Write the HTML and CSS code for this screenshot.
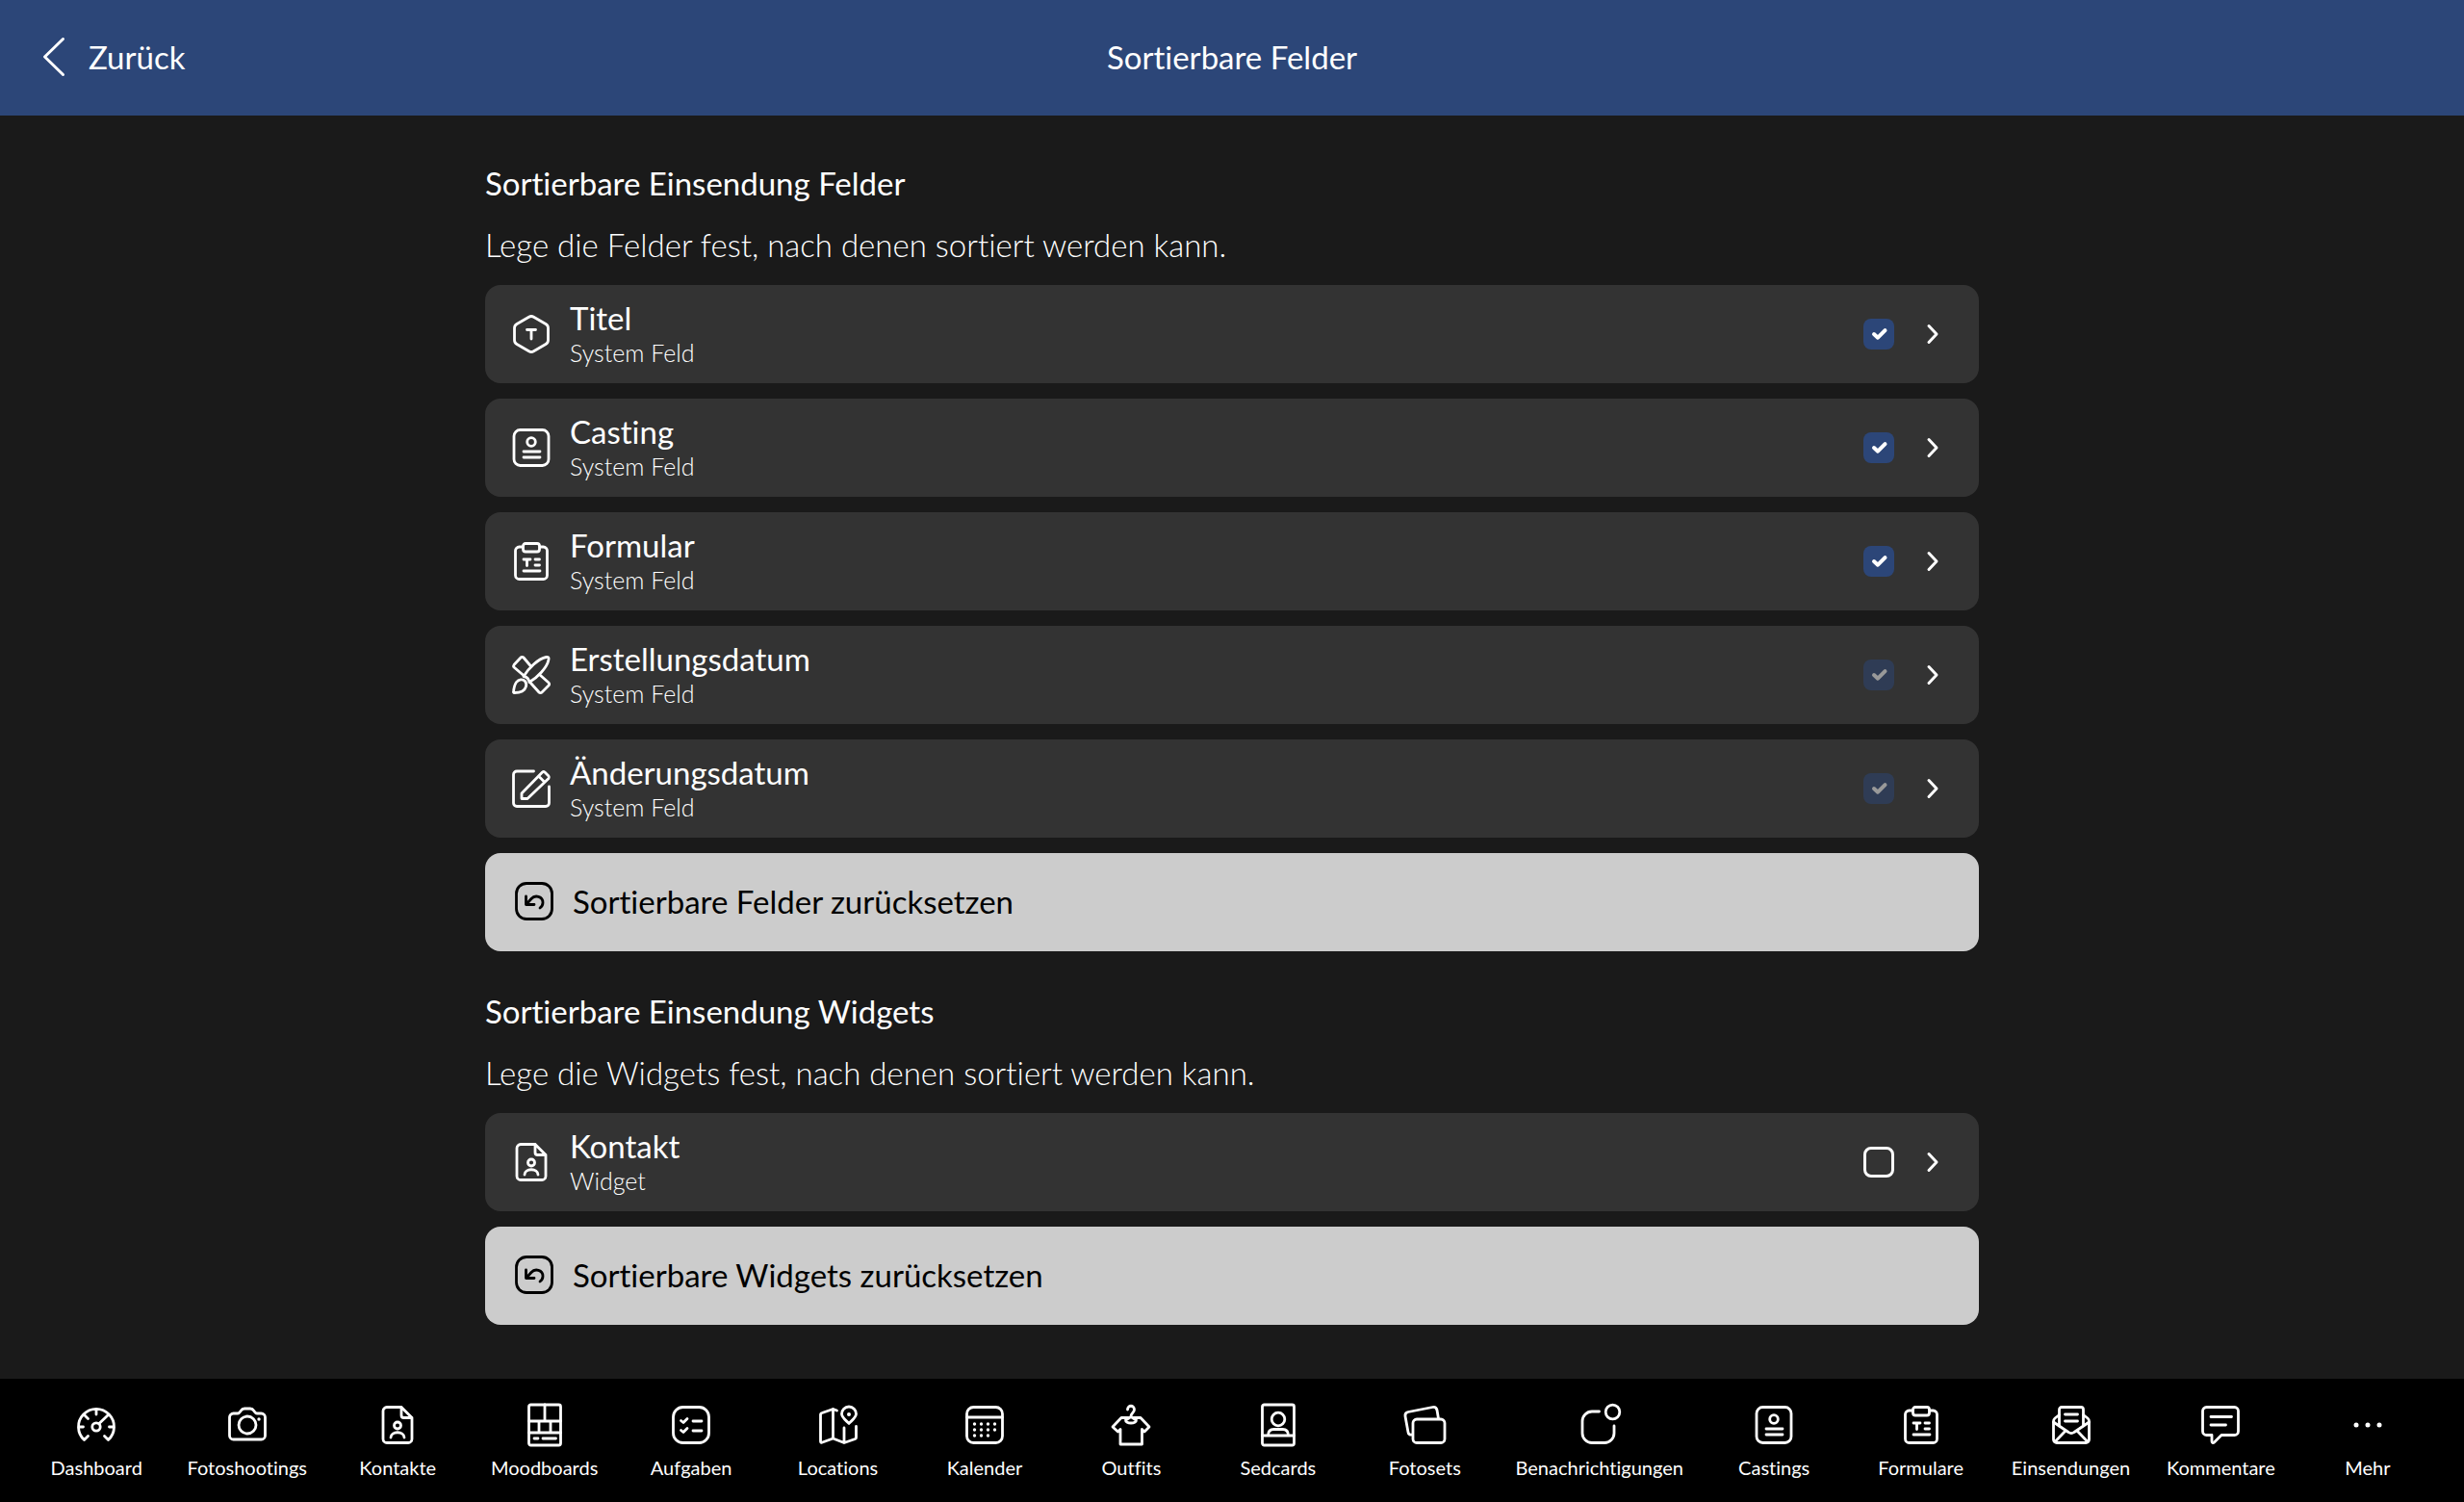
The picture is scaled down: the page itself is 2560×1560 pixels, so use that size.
FILE: index.html
```html
<!DOCTYPE html>
<html lang="de">
<head>
  <meta charset="utf-8">
  <title>Sortierbare Felder</title>
  <meta name="viewport" content="width=device-width, initial-scale=1">
  <link rel="stylesheet" href="styles.css">
</head>
<body>
  <!-- icons used more than once -->
  <svg class="sprite" aria-hidden="true">
    <symbol id="icon-contact" viewBox="0 0 40 40">
      <path d="M24 1.5H9a4 4 0 0 0-4 4v29a4 4 0 0 0 4 4h22a4 4 0 0 0 4-4V12.500L24 1.500V10a2.500 2.500 0 0 0 2.500 2.500H35"/>
      <circle cx="20" cy="20.500" r="3.500"/>
      <path d="M13 33c0-7 14-7 14 0"/>
    </symbol>
    <symbol id="icon-casting" viewBox="0 0 40 40">
      <rect x="2" y="1.500" width="36" height="37" rx="6.500"/>
      <circle cx="20" cy="14" r="4.300"/>
      <path d="M12 24h17M12 30h17"/>
    </symbol>
    <symbol id="icon-form" viewBox="0 0 40 40">
      <path d="M11 5H7.500a4 4 0 0 0-4 4v25.500a4 4 0 0 0 4 4h25a4 4 0 0 0 4-4V9a4 4 0 0 0-4-4H29"/>
      <rect x="11.500" y="1.500" width="17" height="8.500" rx="2.500"/>
      <path d="M12 18h7M15.500 18v6.500M24 18h4.500M24 24h4.500M12 30h17"/>
    </symbol>
    <symbol id="icon-undo" viewBox="0 0 40 40">
      <rect x="1.500" y="1.500" width="37" height="37" rx="10.500"/>
      <path d="M11.500 15v8.500H20M12 23l5-5.500c4-4.500 12-2.500 12 4 0 2.500-1 4-3 5.500"/>
    </symbol>
    <symbol id="icon-chevron" viewBox="0 0 24 24">
      <path d="M8 3.500l8 8.500-8 8.500"/>
    </symbol>
  </svg>

  <header class="topbar">
    <a class="back" href="#">
      <svg class="back-icon" viewBox="0 0 24 40" aria-hidden="true"><path d="M21.500 1.500L2.500 20l19 18.500"/></svg>
      Zurück
    </a>
    <h1 class="topbar-title">Sortierbare Felder</h1>
  </header>

  <main class="content">
    <section class="section">
      <h2 class="section-title">Sortierbare Einsendung Felder</h2>
      <p class="section-text">Lege die Felder fest, nach denen sortiert werden kann.</p>
      <ul class="list">
        <li class="row">
          <svg class="icon" viewBox="0 0 40 40" aria-hidden="true">
            <path d="M17.500 2.200L5 9.500a5 5 0 0 0-2.500 4.300v12.400A5 5 0 0 0 5 30.500l12.500 7.300a5 5 0 0 0 5 0L35 30.500a5 5 0 0 0 2.500-4.300V13.800A5 5 0 0 0 35 9.500L22.500 2.200a5 5 0 0 0-5 0z"/>
            <path d="M15.500 15.500h9M20 15.500V25"/>
          </svg>
          <label class="row-label" for="f-titel"><span class="row-title">Titel</span><span class="row-sub">System Feld</span></label>
          <input class="check" type="checkbox" id="f-titel" checked>
          <button class="open" aria-label="Titel öffnen"><svg class="chevron"><use href="#icon-chevron"/></svg></button>
        </li>
        <li class="row">
          <svg class="icon" aria-hidden="true"><use href="#icon-casting"/></svg>
          <label class="row-label" for="f-casting"><span class="row-title">Casting</span><span class="row-sub">System Feld</span></label>
          <input class="check" type="checkbox" id="f-casting" checked>
          <button class="open" aria-label="Casting öffnen"><svg class="chevron"><use href="#icon-chevron"/></svg></button>
        </li>
        <li class="row">
          <svg class="icon" aria-hidden="true"><use href="#icon-form"/></svg>
          <label class="row-label" for="f-formular"><span class="row-title">Formular</span><span class="row-sub">System Feld</span></label>
          <input class="check" type="checkbox" id="f-formular" checked>
          <button class="open" aria-label="Formular öffnen"><svg class="chevron"><use href="#icon-chevron"/></svg></button>
        </li>
        <li class="row">
          <svg class="icon" viewBox="0 0 40 40" aria-hidden="true">
            <path d="M12 20.500L2 12a2 2 0 0 1 0-2.500L9 2a2 2 0 0 1 3 0l8 9.500M29 20l9 8a2 2 0 0 1 0 3l-7 7a2 2 0 0 1-3 0l-8.500-9.500"/>
            <path d="M12 21.500C17 13.500 27 3 35.500 1.500c2-.3 3 .5 2.500 2.500C36.500 12.500 26 23 18 27.500M12 21.500c3 .5 5.500 3 6 6"/>
            <path d="M13.500 26.500c2.500 3 1 8.500-3 10.500-2.500 1.300-5.500 1.500-8 1.500-1 0-1.200-.7-1-1.500C2 33.500 2.500 30 4.500 27.500c2.500-3 6.500-3.500 9-1z"/>
          </svg>
          <label class="row-label" for="f-erstellt"><span class="row-title">Erstellungsdatum</span><span class="row-sub">System Feld</span></label>
          <input class="check" type="checkbox" id="f-erstellt" checked disabled>
          <button class="open" aria-label="Erstellungsdatum öffnen"><svg class="chevron"><use href="#icon-chevron"/></svg></button>
        </li>
        <li class="row">
          <svg class="icon" viewBox="0 0 40 40" aria-hidden="true">
            <path d="M22.500 2H5a3.500 3.500 0 0 0-3.500 3.500V35A3.500 3.500 0 0 0 5 38.500h30a3.500 3.500 0 0 0 3.500-3.500V18"/>
            <path d="M10 30.500V25L31.500 3a2 2 0 0 1 2.500 0l4 4a2 2 0 0 1 0 2.500L16 30.500zM27.500 7l6 6"/>
          </svg>
          <label class="row-label" for="f-geaendert"><span class="row-title">Änderungsdatum</span><span class="row-sub">System Feld</span></label>
          <input class="check" type="checkbox" id="f-geaendert" checked disabled>
          <button class="open" aria-label="Änderungsdatum öffnen"><svg class="chevron"><use href="#icon-chevron"/></svg></button>
        </li>
      </ul>
      <button class="reset"><svg class="icon" aria-hidden="true"><use href="#icon-undo"/></svg>Sortierbare Felder zurücksetzen</button>
    </section>

    <section class="section">
      <h2 class="section-title">Sortierbare Einsendung Widgets</h2>
      <p class="section-text">Lege die Widgets fest, nach denen sortiert werden kann.</p>
      <ul class="list">
        <li class="row">
          <svg class="icon" aria-hidden="true"><use href="#icon-contact"/></svg>
          <label class="row-label" for="w-kontakt"><span class="row-title">Kontakt</span><span class="row-sub">Widget</span></label>
          <input class="check" type="checkbox" id="w-kontakt">
          <button class="open" aria-label="Kontakt öffnen"><svg class="chevron"><use href="#icon-chevron"/></svg></button>
        </li>
      </ul>
      <button class="reset"><svg class="icon" aria-hidden="true"><use href="#icon-undo"/></svg>Sortierbare Widgets zurücksetzen</button>
    </section>
  </main>

  <nav class="tabbar">
    <a class="tab" href="#">
      <svg class="icon" viewBox="0 0 40 40" aria-hidden="true">
        <path d="M11.500 31.500L7.500 35.500a18.500 18.500 0 1 1 25 0l-4-4M20 4v5M2 22h4.500M33.500 22H38M8 10l3.500 3.500M23 18.500L33 9"/>
        <circle cx="20" cy="22" r="4.200"/>
      </svg>
      Dashboard
    </a>
    <a class="tab" href="#">
      <svg class="icon" viewBox="0 0 40 40" aria-hidden="true">
        <path d="M5.500 8H10c1.500 0 2-1 3-2.500S15 3 17 3h6c2 0 3 1 4 2.500S28.500 8 30 8h4.500a4 4 0 0 1 4 4v19a4 4 0 0 1-4 4h-29a4 4 0 0 1-4-4V12a4 4 0 0 1 4-4z"/>
        <circle cx="20" cy="20" r="9"/>
        <circle class="dot" cx="32" cy="14" r="1.700"/>
      </svg>
      Fotoshootings
    </a>
    <a class="tab" href="#"><svg class="icon" aria-hidden="true"><use href="#icon-contact"/></svg>Kontakte</a>
    <a class="tab" href="#">
      <svg class="icon" viewBox="0 0 40 40" aria-hidden="true">
        <rect x="3.500" y="-1" width="33" height="42" rx="2"/>
        <path d="M3.500 16h33M3.500 28h33M20-1v17M14 16v12M26 16v12M9 34h4M18 34h13.500"/>
      </svg>
      Moodboards
    </a>
    <a class="tab" href="#">
      <svg class="icon" viewBox="0 0 40 40" aria-hidden="true">
        <rect x="1.500" y="1.500" width="37" height="37" rx="10"/>
        <path d="M9.500 15.500l2.500 2 4-4M9.500 25.500l2.500 2 4-4M22 16h9M22 26h9"/>
      </svg>
      Aufgaben
    </a>
    <a class="tab" href="#">
      <svg class="icon" viewBox="0 0 40 40" aria-hidden="true">
        <path d="M18.500 5L14.500 3.500 3 7.500a2 2 0 0 0-1.500 2V37c0 1.200.8 1.500 2 1L14.500 34l11.500 4.500 11.500-4a1.500 1.500 0 0 0 1-1.500V21.500M14.500 3.500V34M26 23v15"/>
        <path d="M31 18.500c-2-2.500-7.500-6-7.500-10a7.500 7.500 0 0 1 15 0c0 4-5.500 7.500-7.500 10z"/>
        <circle class="dot" cx="31" cy="9" r="2"/>
      </svg>
      Locations
    </a>
    <a class="tab" href="#">
      <svg class="icon" viewBox="0 0 40 40" aria-hidden="true">
        <rect x="1.500" y="1.500" width="37" height="37" rx="7"/>
        <path d="M1.500 12h37"/>
        <path class="dots" d="M9.500 19h0M16.500 19h0M23.500 19h0M30.500 19h0M9.500 25h0M16.500 25h0M23.500 25h0M30.500 25h0M9.500 31h0M16.500 31h0M23.500 31h0"/>
      </svg>
      Kalender
    </a>
    <a class="tab" href="#">
      <svg class="icon" viewBox="0 0 40 40" aria-hidden="true">
        <path d="M16.500 4c0-5 7-5 7 0 0 3.500-3.500 3-3.500 7.500L14.500 15c-.5 4 11.500 4 11 0L20 11.500"/>
        <path d="M17 12.500H10L1 22l5.500 5L9 24.500V40h22.500V24.500L34 27l5-5-9-9.500h-7"/>
      </svg>
      Outfits
    </a>
    <a class="tab" href="#">
      <svg class="icon" viewBox="0 0 40 40" aria-hidden="true">
        <rect x="3.500" y="-1" width="33" height="42" rx="2"/>
        <circle cx="20" cy="14" r="6.800"/>
        <path d="M3.500 31h33M9.500 31c0-4 2-6.500 6-6.500h9c4 0 6 2.500 6 6.500"/>
      </svg>
      Sedcards
    </a>
    <a class="tab" href="#">
      <svg class="icon" viewBox="0 0 40 40" aria-hidden="true">
        <rect x="8" y="14" width="33" height="24.500" rx="4"/>
        <path d="M7 30a3 3 0 0 1-4-2.500L0 11c-.4-2.500.8-4 3-4.500l25.500-5c2.500-.5 3.800.5 4.500 3l1.500 9"/>
      </svg>
      Fotosets
    </a>
    <a class="tab" href="#">
      <svg class="icon" viewBox="0 0 40 40" aria-hidden="true">
        <path d="M19.500 6H12A10 10 0 0 0 2 16v12.500a10 10 0 0 0 10 10h13a10 10 0 0 0 10-10V21"/>
        <circle cx="33.500" cy="6.500" r="7.300"/>
      </svg>
      Benachrichtigungen
    </a>
    <a class="tab" href="#"><svg class="icon" aria-hidden="true"><use href="#icon-casting"/></svg>Castings</a>
    <a class="tab" href="#"><svg class="icon" aria-hidden="true"><use href="#icon-form"/></svg>Formulare</a>
    <a class="tab" href="#">
      <svg class="icon" viewBox="0 0 40 40" aria-hidden="true">
        <path d="M7.500 21V4A2.500 2.500 0 0 1 10 1.500h20A2.500 2.500 0 0 1 32.500 4v17M13.500 9h13M13.500 16h13"/>
        <path d="M7.500 9.500L3 13a4 4 0 0 0-1.500 3.200V35A3.500 3.500 0 0 0 5 38.500h30a3.500 3.500 0 0 0 3.500-3.500V16.200A4 4 0 0 0 37 13l-4.500-3.500"/>
        <path d="M1.500 17L17 27.500c2 1.500 4 1.500 6 0L38.500 17M3 37.500L14 26M37 37.500L26 26"/>
      </svg>
      Einsendungen
    </a>
    <a class="tab" href="#">
      <svg class="icon" viewBox="0 0 40 40" aria-hidden="true">
        <path d="M5.500 1.500h29a4 4 0 0 1 4 4v21a4 4 0 0 1-4 4H21L13.500 38c-1.200 1-2.500.5-2.500-1v-6.500H5.500a4 4 0 0 1-4-4v-21a4 4 0 0 1 4-4zM10 11.500h21.500M10 20h15.500"/>
      </svg>
      Kommentare
    </a>
    <a class="tab" href="#">
      <svg class="icon" viewBox="0 0 40 40" aria-hidden="true">
        <circle class="dot" cx="8" cy="20" r="2.500"/>
        <circle class="dot" cx="20" cy="20" r="2.500"/>
        <circle class="dot" cx="32" cy="20" r="2.500"/>
      </svg>
      Mehr
    </a>
  </nav>
</body>
</html>
```

FILE: styles.css
```css
* {
  box-sizing: border-box;
}
body {
  margin: 0;
  min-height: 100vh;
  display: flex;
  flex-direction: column;
  background-color: #1a1a1a;
  color: #fff;
  font-family: Lato, "Open Sans", sans-serif;
  font-size: 33px;
  font-variant-ligatures: none;
  line-height: 40px;
}
h1, h2, p, ul {
  margin: 0;
  padding: 0;
  font-size: 33px;
}
a {
  color: inherit;
  text-decoration: none;
}
button {
  font: inherit;
  font-variant-ligatures: none;
  border: none;
  cursor: pointer;
}
svg {
  flex: none;
  fill: none;
  stroke: currentColor;
  stroke-width: 2.8;
  stroke-linecap: round;
  stroke-linejoin: round;
  overflow: visible;
}
.sprite {
  display: none;
}
.icon {
  width: 40px;
  height: 40px;
}
.dot {
  fill: currentColor;
  stroke: none;
}
.dots {
  stroke-width: 3.4;
}

/* top bar */
.topbar {
  display: grid;
  grid-template-columns: 1fr auto 1fr;
  align-items: center;
  height: 120px;
  padding: 0 44px 2px;
  background-color: #2c4678;
}
.topbar-title {
  font-weight: 400;
}
.back {
  display: flex;
  align-items: center;
  gap: 24px;
  justify-self: start;
}
.back-icon {
  width: 24px;
  height: 40px;
  stroke-width: 3;
}

/* content */
.content {
  flex: 1;
  width: 100%;
  max-width: 1600px;
  margin: 0 auto;
  padding: 50px 24px;
}
.section + .section {
  margin-top: 42px;
}
.section-title {
  font-weight: 400;
}
.section-text {
  margin: 24px 0 22px;
  font-weight: 300;
}
.list {
  list-style: none;
}
.row, .reset {
  display: flex;
  align-items: center;
  width: 100%;
  height: 102px;
  margin-bottom: 16px;
  border-radius: 16px;
}
.row {
  padding: 0 36px 0 28px;
  background-color: #333;
}
.row-label {
  flex: 1;
  display: flex;
  flex-direction: column;
  padding: 0 0 2px 20px;
}
.row-sub {
  font-size: 25px;
  line-height: 32px;
  font-weight: 300;
}
.reset {
  gap: 20px;
  margin-bottom: 0;
  padding: 0 31px 2px;
  background-color: #ccc;
  color: #000;
  text-align: left;
}
.check {
  appearance: none;
  width: 32px;
  height: 32px;
  margin: 0;
  border: 3px solid #fff;
  border-radius: 8px;
}
.check:checked {
  border: none;
  background: #2c4678 url("data:image/svg+xml,%3Csvg xmlns='http://www.w3.org/2000/svg' viewBox='0 0 32 32'%3E%3Cpath d='M11 16l4 3.700 7.500-7.500' fill='none' stroke='%23fff' stroke-width='4' stroke-linecap='round' stroke-linejoin='round'/%3E%3C/svg%3E");
}
.check:disabled {
  opacity: 0.5;
}
.open {
  display: flex;
  margin-left: 28px;
  padding: 0;
  background: none;
  color: #fff;
}
.chevron {
  width: 24px;
  height: 24px;
  stroke-width: 3;
}

/* bottom navigation */
.tabbar {
  display: flex;
  position: sticky;
  bottom: 0;
  height: 128px;
  padding: 28px 24px 0;
  background-color: #000;
}
.tab {
  flex: 1 1 0;
  display: flex;
  flex-direction: column;
  align-items: center;
  gap: 10px;
  padding: 0 18px;
  font-size: 20px;
  line-height: 28px;
}
```
